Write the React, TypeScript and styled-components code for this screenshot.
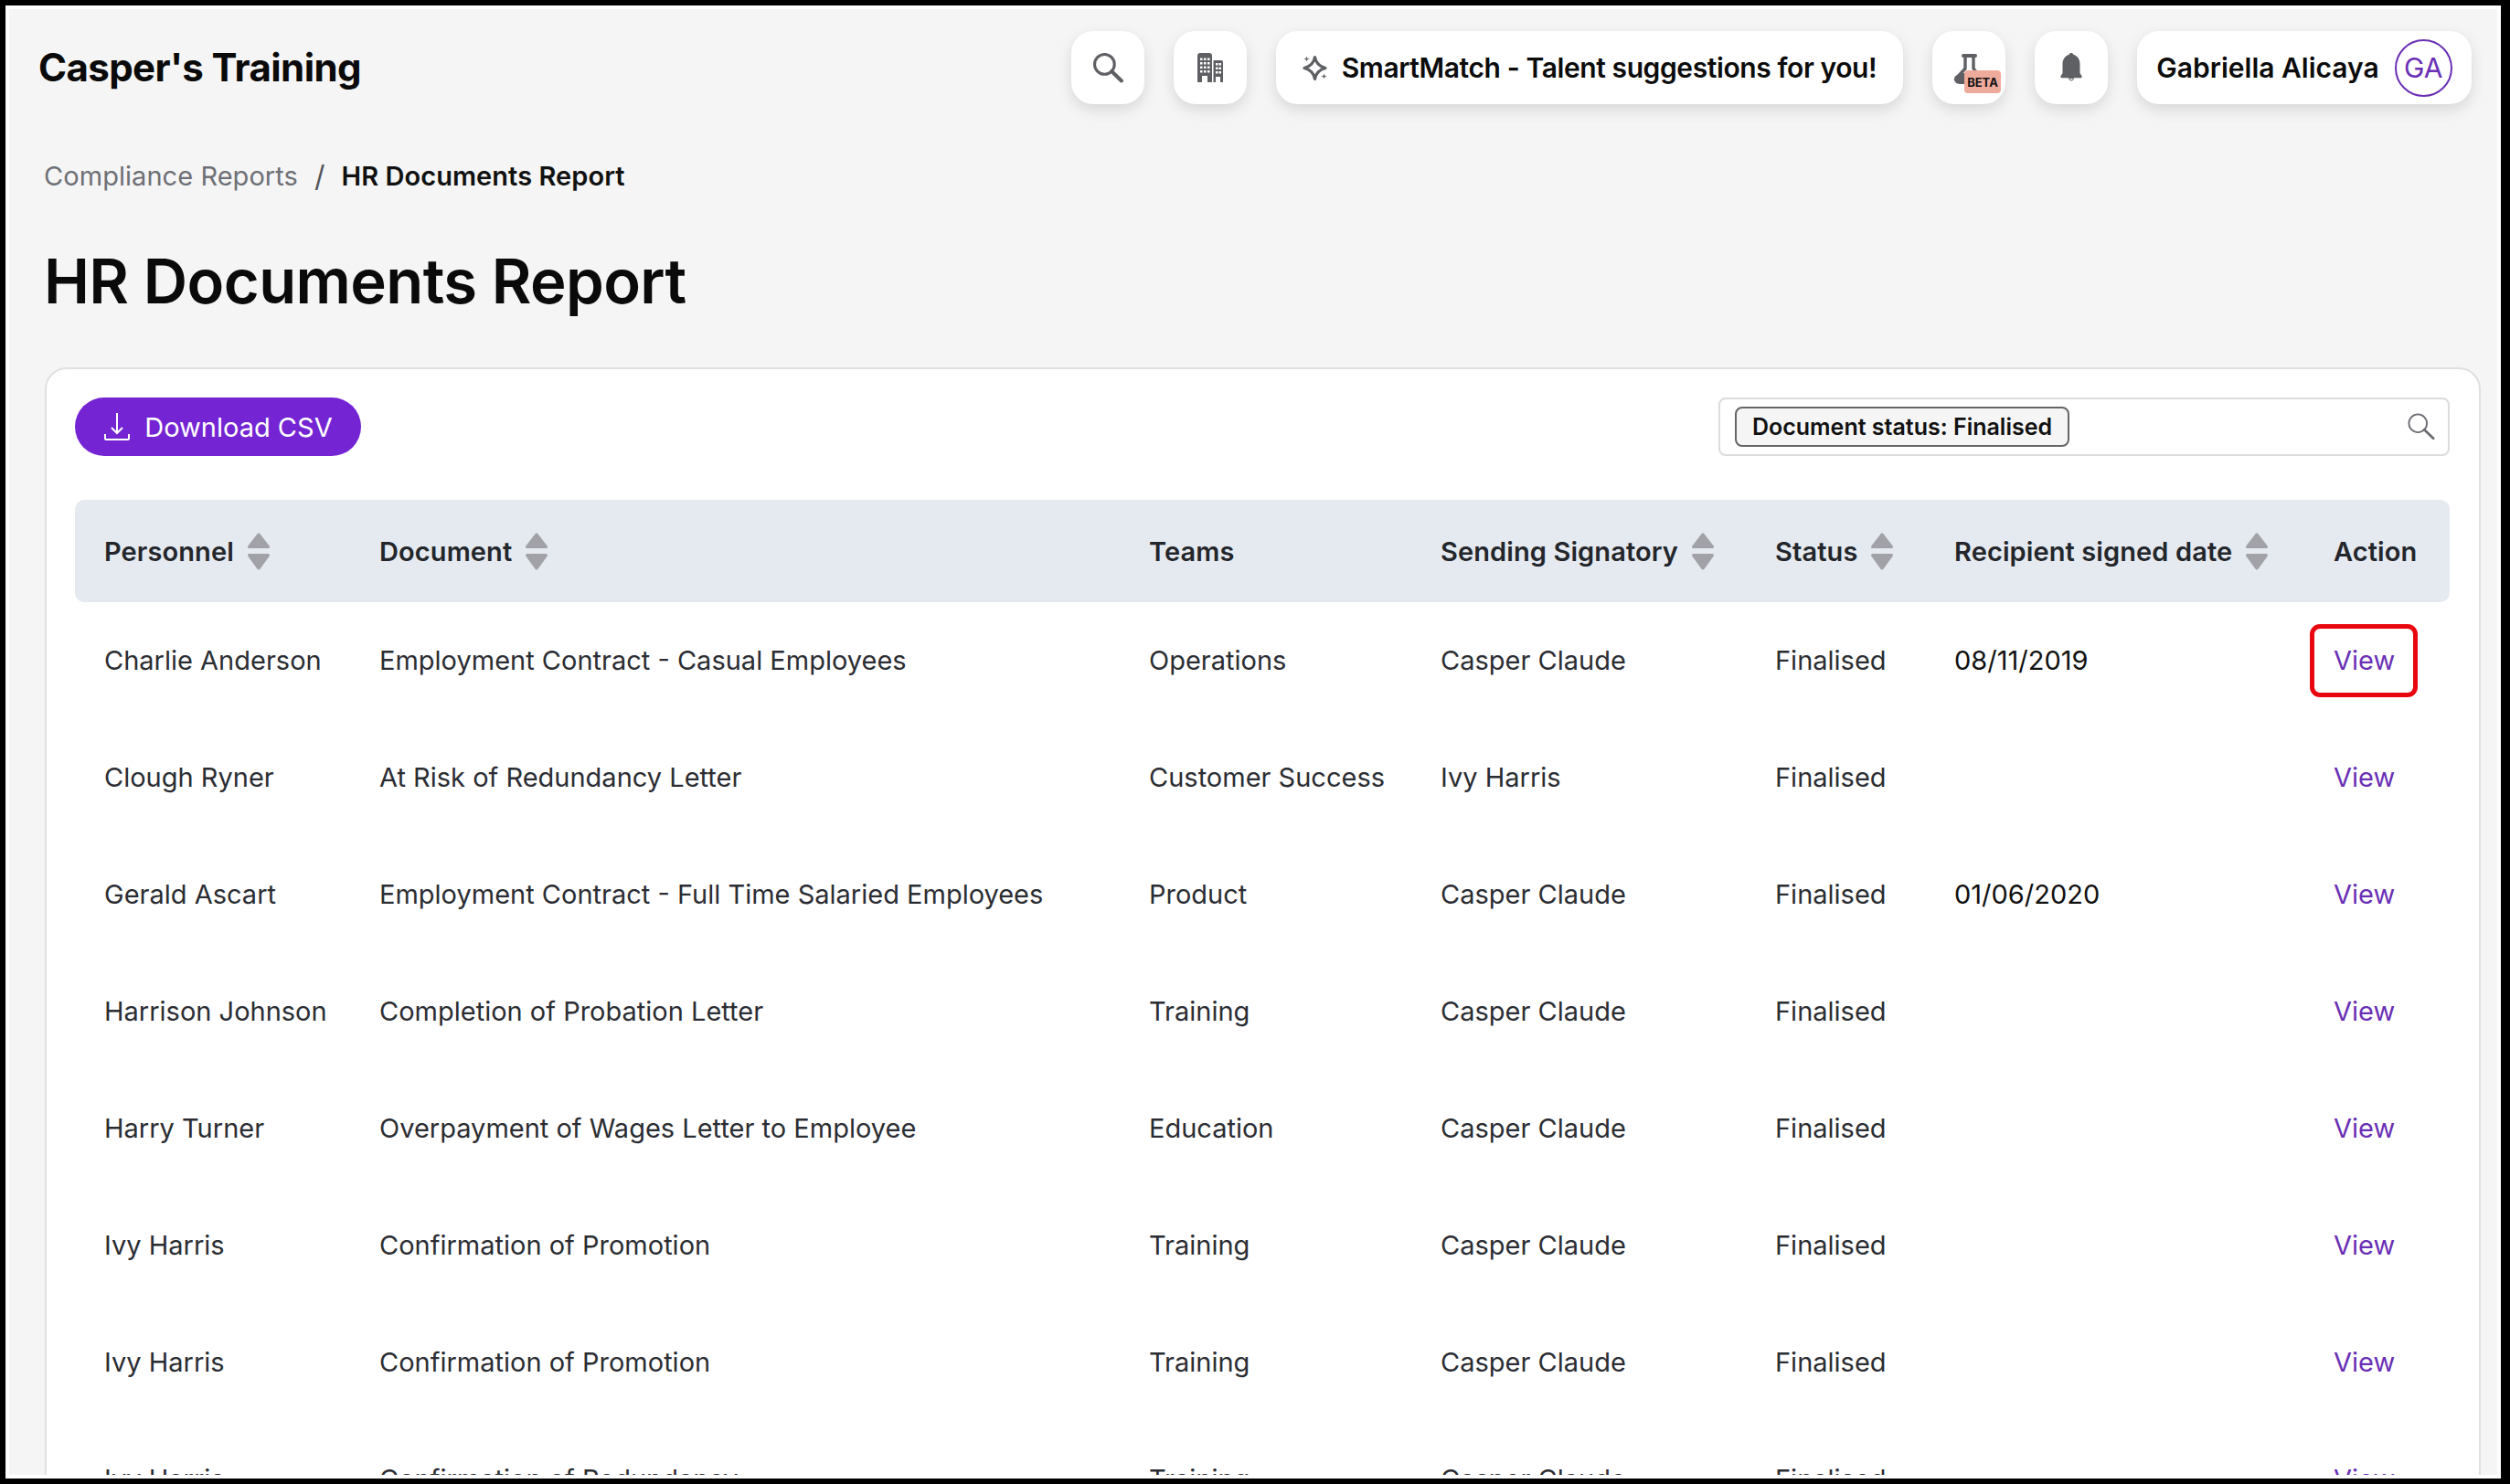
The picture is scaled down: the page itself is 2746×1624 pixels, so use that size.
import React from 'react';
import styled, { createGlobalStyle } from 'styled-components';

const Global = createGlobalStyle`
  html, body { margin: 0; padding: 0; background: #000; }
  * { box-sizing: border-box; }
`;

const Frame = styled.div`
  width: 2746px;
  height: 1624px;
  overflow: hidden;
  background: #000;
  padding: 6px 10px 6px 6px;
`;

const Page = styled.main`
  height: 100%;
  overflow: hidden;
  background: #f5f5f5;
  border: 4px solid #fff;
  font-family: Inter, "Liberation Sans", sans-serif;
  color: #2b2d33;
  padding: 0 18px 0 39px;
`;

const TopBar = styled.header`
  height: 104px;
  display: flex;
  align-items: flex-end;
  margin: 0 10px 0 -7px;
`;

const Brand = styled.div`
  font-size: 42px;
  font-weight: 650;
  color: #0a0a0a;
  letter-spacing: -0.6px;
  margin-right: auto;
  align-self: center;
  padding-top: 23px;
`;

const TopButtons = styled.div`
  display: flex;
  gap: 32px;
  height: 80px;
`;

const Pill = styled.div<{ $w: number }>`
  height: 80px;
  width: ${(p) => p.$w}px;
  background: #fff;
  border-radius: 24px;
  box-shadow: 0 6px 16px rgba(0, 0, 0, 0.12);
  display: flex;
  align-items: center;
  justify-content: center;
  font-size: 30px;
  font-weight: 600;
  color: #0c0c0c;
  position: relative;
`;

const SmartText = styled.span`
  letter-spacing: -0.4px;
`;

const Avatar = styled.div`
  width: 63px;
  height: 63px;
  border-radius: 50%;
  border: 2px solid #6a2fb5;
  color: #6a2fb5;
  font-size: 30px;
  font-weight: 400;
  display: flex;
  align-items: center;
  justify-content: center;
`;

const UserName = styled.span`
  margin-right: 17px;
`;

const SparkleIcon = styled.svg`
  margin-right: 15px;
`;

const BetaTag = styled.span`
  position: absolute;
  left: 35px;
  top: 43px;
  width: 40px;
  height: 25px;
  background: #eeab9b;
  border-radius: 4px;
  color: #111;
  font-size: 13px;
  font-weight: 700;
  display: flex;
  align-items: center;
  justify-content: center;
`;

const FlaskIcon = styled.svg`
  position: absolute;
  left: 23px;
  top: 24px;
`;

const Crumbs = styled.nav`
  display: flex;
  align-items: center;
  height: 40px;
  margin: 58px 0 0 -1px;
  font-size: 29px;
  letter-spacing: 0.05px;
  color: #6e7076;
`;

const CrumbSep = styled.span`
  margin: 0 18px;
  font-size: 32px;
  color: #55575c;
`;

const CrumbNow = styled.span`
  color: #111;
  font-weight: 600;
`;

const Title = styled.h1`
  margin: 51px 0 0 -1px;
  height: 90px;
  line-height: 90px;
  font-size: 67px;
  font-weight: 600;
  color: #0a0a0a;
  letter-spacing: -0.6px;
`;

const Card = styled.section`
  margin-top: 49px;
  background: #fff;
  border: 2px solid #e0e0e0;
  border-radius: 24px 24px 0 0;
  padding: 31px 32px 0 31px;
  height: 1300px;
`;

const Toolbar = styled.div`
  display: flex;
  justify-content: space-between;
  height: 64px;
  margin-bottom: 48px;
`;

const DownloadButton = styled.button`
  width: 313px;
  height: 64px;
  border: none;
  border-radius: 32px;
  background: #7524d4;
  color: #fff;
  font-family: inherit;
  font-size: 29px;
  font-weight: 400;
  display: flex;
  align-items: center;
  justify-content: center;
  gap: 15px;
`;

const SearchBox = styled.div`
  width: 800px;
  height: 64px;
  border: 2px solid #dcdcdc;
  border-radius: 8px;
  display: flex;
  align-items: center;
  justify-content: space-between;
  padding: 0 14px 0 16px;
`;

const Chip = styled.span`
  height: 44px;
  width: 366px;
  border: 2px solid #666;
  border-radius: 8px;
  background: #f5f5f5;
  color: #111;
  font-size: 25px;
  font-weight: 600;
  display: flex;
  align-items: center;
  justify-content: center;
`;

const cols = '301px 842px 319px 366px 196px 415px 159px';

const HeadRow = styled.div`
  display: grid;
  grid-template-columns: ${cols};
  height: 112px;
  align-items: center;
  background: #e5eaf0;
  border-radius: 10px;
`;

const HeadCell = styled.div`
  padding-left: 32px;
  font-size: 29px;
  font-weight: 600;
  letter-spacing: 0.1px;
  color: #23262b;
  display: flex;
  align-items: center;
  gap: 15px;
  white-space: nowrap;
`;

const Row = styled.div`
  display: grid;
  grid-template-columns: ${cols};
  height: 128px;
  align-items: center;
`;

const Cell = styled.div<{ $dark?: boolean }>`
  padding: 0 0 2px 32px;
  font-size: 29px;
  color: ${(p) => (p.$dark ? '#111' : '#2b2d33')};
  white-space: nowrap;
`;

const ViewCell = styled(Cell)`
  position: relative;
  color: #6a2fb5;
`;

const Highlight = styled.span`
  position: absolute;
  left: 6px;
  top: -22px;
  width: 118px;
  height: 80px;
  border: 5px solid #e8060f;
  border-radius: 11px;
`;

const Search = ({ size, color, w }: { size: number; color: string; w: number }) => (
  <svg width={size} height={size} viewBox="0 0 32 32" fill="none" stroke={color}>
    <circle cx="12" cy="12" r="10.5" strokeWidth={w} />
    <path d="M19.5 19.5 30 29.5" strokeWidth={w + 1} strokeLinecap="round" />
  </svg>
);

const Sort = () => (
  <svg width="24" height="42" viewBox="0 0 24 42" fill="#a0a2a8">
    <path d="M12 1.5c.9 0 1.600.6 2 1.400L23.400 15c1.200 1.500.4 3-1.400 3H2c-1.800 0-2.600-1.500-1.400-3L10 2.900c.4-.8 1.100-1.400 2-1.400Z" />
    <path d="M12 41.500c.9 0 1.600-.6 2-1.400L23.400 27c1.200-1.500.4-3-1.400-3H2c-1.800 0-2.600 1.500-1.400 3L10 40.100c.4.800 1.100 1.400 2 1.400Z" />
  </svg>
);

const headers: [string, boolean][] = [
  ['Personnel', true],
  ['Document', true],
  ['Teams', false],
  ['Sending Signatory', true],
  ['Status', true],
  ['Recipient signed date', true],
  ['Action', false],
];

const rows = [
  ['Charlie Anderson', 'Employment Contract - Casual Employees', 'Operations', 'Casper Claude', '08/11/2019'],
  ['Clough Ryner', 'At Risk of Redundancy Letter', 'Customer Success', 'Ivy Harris', ''],
  ['Gerald Ascart', 'Employment Contract - Full Time Salaried Employees', 'Product', 'Casper Claude', '01/06/2020'],
  ['Harrison Johnson', 'Completion of Probation Letter', 'Training', 'Casper Claude', ''],
  ['Harry Turner', 'Overpayment of Wages Letter to Employee', 'Education', 'Casper Claude', ''],
  ['Ivy Harris', 'Confirmation of Promotion', 'Training', 'Casper Claude', ''],
  ['Ivy Harris', 'Confirmation of Promotion', 'Training', 'Casper Claude', ''],
  ['Ivy Harris', 'Confirmation of Redundancy', 'Training', 'Casper Claude', ''],
];

export default function App() {
  return (
    <Frame>
      <Global />
      <Page>
        <TopBar>
          <Brand>Casper's Training</Brand>
          <TopButtons>
            <Pill $w={80}><Search size={33} color="#5f6064" w={3} /></Pill>
            <Pill $w={80}>
              <svg width="28" height="32" viewBox="0 0 28 32" fill="#5f6064">
                <path fillRule="evenodd" d="M0 3a3 3 0 0 1 3-3h10a3 3 0 0 1 3 3v29H0V3Zm3 2.500v2.500h2.500V5.500H3Zm4 0v2.500h2.500V5.500H7Zm4 0v2.500h2.500V5.500H11ZM3 10v2.500h2.500V10H3Zm4 0v2.500h2.500V10H7Zm4 0v2.500h2.500V10H11ZM3 14.500V17h2.500v-2.500H3Zm4 0V17h2.500v-2.500H7Zm4 0V17h2.500v-2.500H11ZM3 19v2.500h2.500V19H3Zm4 0v2.500h2.500V19H7Zm4 0v2.500h2.500V19H11ZM5 25v7h6v-7H5Z" />
                <path fillRule="evenodd" d="M17.500 8H26a2 2 0 0 1 2 2v22H17.500V8Zm2.500 3v2.500h2.500V11H20Zm3.500 0v2.500H26V11h-2.500ZM20 15.500V18h2.500v-2.500H20Zm3.500 0V18H26v-2.500h-2.500ZM20 20v2.500h2.500V20H20Zm3.500 0v2.500H26V20h-2.500ZM20 26v6h5v-6h-5Z" />
              </svg>
            </Pill>
            <Pill $w={686}>
              <SparkleIcon width="28" height="28" viewBox="0 0 28 28" fill="none">
                <path d="M13.500 2.500C14.500 8.800 17.800 12.500 25 14.500 17.800 16.500 14.500 20.200 13.500 26.500 12.500 20.200 9.200 16.500 2 14.500 9.200 12.500 12.500 8.800 13.500 2.500Z" stroke="#5f6064" strokeWidth="3.200" strokeLinejoin="round" />
                <path fill="#5f6064" stroke="#fff" strokeWidth="1.200" d="M4.500 0l1.300 3.200L9 4.500 5.800 5.800 4.500 9 3.200 5.800 0 4.500l3.200-1.300L4.500 0ZM23.500 19l1.300 3.200 3.200 1.300-3.200 1.300-1.300 3.200-1.300-3.200-3.200-1.300 3.200-1.300 1.300-3.200Z" />
              </SparkleIcon>
              <SmartText>SmartMatch - Talent suggestions for you!</SmartText>
            </Pill>
            <Pill $w={80}>
              <FlaskIcon width="40" height="36" viewBox="0 0 40 36" fill="#5f6064">
                <rect x="9" y="1" width="17" height="4" rx="2" />
                <path d="M13 4v13L3 28M22 4v13l9 11" fill="none" stroke="#5f6064" strokeWidth="3.400" />
                <path d="M7 22h24v12H6.500a5.500 5.500 0 0 1-4.800-8.300L7 22Z" />
              </FlaskIcon>
              <BetaTag>BETA</BetaTag>
            </Pill>
            <Pill $w={80}>
              <svg width="24" height="32" viewBox="0 0 24 32" fill="#5f6064">
                <path d="M12 0c1.200 0 2.100.7 2.300 1.700C18.900 3 21.500 7 21.500 12v10l2 3.300c.6 1-.1 1.900-1 1.900h-21c-.9 0-1.600-.9-1-1.900l2-3.300V12c0-5 2.600-9 7.200-10.300C9.900.7 10.800 0 12 0Z" />
                <path d="M9.500 27.500h5a2.500 2.500 0 0 1-5 0Z" stroke="#5f6064" strokeWidth="1" fill="none" />
              </svg>
            </Pill>
            <Pill $w={366}>
              <UserName>Gabriella Alicaya</UserName>
              <Avatar>GA</Avatar>
            </Pill>
          </TopButtons>
        </TopBar>
        <Crumbs>
          Compliance Reports
          <CrumbSep>/</CrumbSep>
          <CrumbNow>HR Documents Report</CrumbNow>
        </Crumbs>
        <Title>HR Documents Report</Title>
        <Card>
          <Toolbar>
            <DownloadButton>
              <svg width="30" height="32" viewBox="0 0 30 32" fill="none" stroke="#fff" strokeWidth="2">
                <path d="M15 1v21M9 17l6 6 6-6" />
                <path d="M2 24v5a1 1 0 0 0 1 1h24a1 1 0 0 0 1-1v-5" />
              </svg>
              Download CSV
            </DownloadButton>
            <SearchBox>
              <Chip>Document status: Finalised</Chip>
              <Search size={30} color="#6b6d72" w={2} />
            </SearchBox>
          </Toolbar>
          <HeadRow>
            {headers.map(([h, s]) => (
              <HeadCell key={h}>
                {h}
                {s && <Sort />}
              </HeadCell>
            ))}
          </HeadRow>
          {rows.map((r, i) => (
            <Row key={i}>
              <Cell>{r[0]}</Cell>
              <Cell>{r[1]}</Cell>
              <Cell>{r[2]}</Cell>
              <Cell>{r[3]}</Cell>
              <Cell>Finalised</Cell>
              <Cell $dark>{r[4]}</Cell>
              <ViewCell>
                {i === 0 && <Highlight />}
                View
              </ViewCell>
            </Row>
          ))}
        </Card>
      </Page>
    </Frame>
  );
}
